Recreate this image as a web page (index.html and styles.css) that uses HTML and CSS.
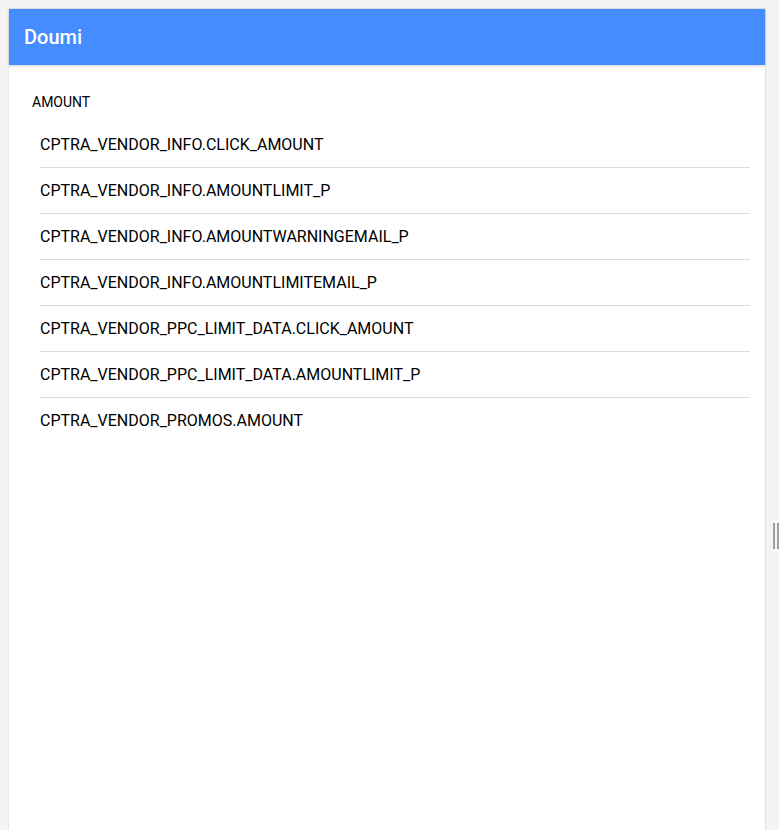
FILE: index.html
```html
<!DOCTYPE html>
<html>
<head>
<meta charset="utf-8">
<link rel="stylesheet" href="styles.css">
</head>
<body>
<div class="page">
  <div class="card">
    <header class="toolbar">Doumi</header>
    <div class="content">
      <div class="label">AMOUNT</div>
      <ul class="list">
        <li>CPTRA_VENDOR_INFO.CLICK_AMOUNT</li>
        <li>CPTRA_VENDOR_INFO.AMOUNTLIMIT_P</li>
        <li>CPTRA_VENDOR_INFO.AMOUNTWARNINGEMAIL_P</li>
        <li>CPTRA_VENDOR_INFO.AMOUNTLIMITEMAIL_P</li>
        <li>CPTRA_VENDOR_PPC_LIMIT_DATA.CLICK_AMOUNT</li>
        <li>CPTRA_VENDOR_PPC_LIMIT_DATA.AMOUNTLIMIT_P</li>
        <li>CPTRA_VENDOR_PROMOS.AMOUNT</li>
      </ul>
    </div>
  </div>
  <div class="resizer"><span class="grip"></span></div>
</div>
</body>
</html>
```
FILE: styles.css
```css
html, body {
  margin: 0;
  height: 100%;
  overflow: hidden;
}
body {
  background: #f4f4f4;
  font-family: Roboto, "Liberation Sans", sans-serif;
  color: #000;
}
.page {
  display: flex;
  height: 100%;
  padding: 8px 0 0 8px;
  box-sizing: border-box;
}
.card {
  width: 758px;
  background: #fff;
  border: 1px solid #e2e2e2;
  border-bottom: none;
  border-left-color: #e8e8e8;
  box-sizing: border-box;
  flex: none;
}
.toolbar {
  height: 56px;
  background: #448cff;
  color: #fff;
  font-size: 20px;
  font-weight: 500;
  display: flex;
  align-items: center;
  padding-left: 15px;
  box-shadow: 0 1px 3px rgba(0,0,0,0.18);
}
.content {
  padding: 29px 15px 0 23px;
}
.label {
  font-size: 14px;
  line-height: 16px;
}
.list {
  list-style: none;
  margin: 12px 0 0 8px;
  padding: 0;
}
.list li {
  height: 46px;
  line-height: 46px;
  font-size: 16px;
  border-bottom: 1px solid #dcdcdc;
  box-sizing: border-box;
}
.list li:last-child {
  border-bottom: none;
}
.resizer {
  flex: 1;
  display: flex;
  align-items: flex-start;
  padding-left: 7px;
}
.grip {
  width: 2px;
  height: 26px;
  margin-top: 515px;
  border-left: 2px solid #a0a0a0;
  border-right: 2px solid #a0a0a0;
}
```
